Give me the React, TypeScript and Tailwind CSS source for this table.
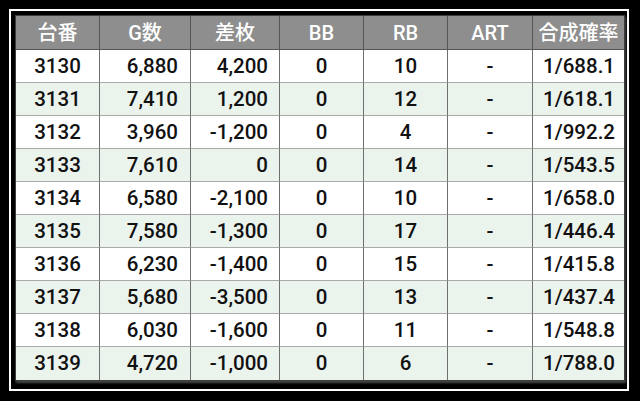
const headers = ["台番", "G数", "差枚", "BB", "RB", "ART", "合成確率"];

const rows = [
  ["3130", "6,880", "4,200", "0", "10", "-", "1/688.1"],
  ["3131", "7,410", "1,200", "0", "12", "-", "1/618.1"],
  ["3132", "3,960", "-1,200", "0", "4", "-", "1/992.2"],
  ["3133", "7,610", "0", "0", "14", "-", "1/543.5"],
  ["3134", "6,580", "-2,100", "0", "10", "-", "1/658.0"],
  ["3135", "7,580", "-1,300", "0", "17", "-", "1/446.4"],
  ["3136", "6,230", "-1,400", "0", "15", "-", "1/415.8"],
  ["3137", "5,680", "-3,500", "0", "13", "-", "1/437.4"],
  ["3138", "6,030", "-1,600", "0", "11", "-", "1/548.8"],
  ["3139", "4,720", "-1,000", "0", "6", "-", "1/788.0"],
];

// alignment per column for body cells
const bodyAlign = [
  "justify-center",
  "justify-end pr-[12px]",
  "justify-end pr-[11px]",
  "justify-center",
  "justify-center",
  "justify-center",
  "justify-end pr-[9px]",
];

export default function App() {
  return (
    <div
      className="w-[640px] h-[401px] bg-black pt-[9px] pl-[9px]"
      style={{ fontFamily: "Roboto, 'Noto Sans CJK JP', sans-serif" }}
    >
      <div className="w-[620px] h-[382px] border-2 border-white pt-[4px] pl-[4px]">
        <div className="w-[610px] border border-[#3c3c3c] shadow-[1px_2px_2px_rgba(120,120,120,0.6)]">
          <div className="grid grid-cols-[84px_91px_89px_84px_84px_85px_91px]">
            {headers.map((h, i) => (
              <div
                key={h}
                className={
                  "h-[34px] bg-[#8e8e8e] text-white text-[20px] font-medium flex items-center justify-center border-b border-[#555] " +
                  (i < 6 ? "border-r border-r-[#555]" : "")
                }
              >
                {h}
              </div>
            ))}
            {rows.map((r, ri) =>
              r.map((c, ci) => (
                <div
                  key={ri + "-" + ci}
                  className={
                    "h-[33px] text-[#111] text-[20.5px] font-medium flex items-center " +
                    bodyAlign[ci] +
                    (ri % 2 === 1 ? " bg-[#ebf3ed]" : " bg-white") +
                    (ri < 9 ? " border-b border-[#a9a9a9]" : "") +
                    (ci < 6 ? " border-r border-r-[#6e6e6e]" : "")
                  }
                >
                  {c}
                </div>
              ))
            )}
          </div>
        </div>
      </div>
    </div>
  );
}
